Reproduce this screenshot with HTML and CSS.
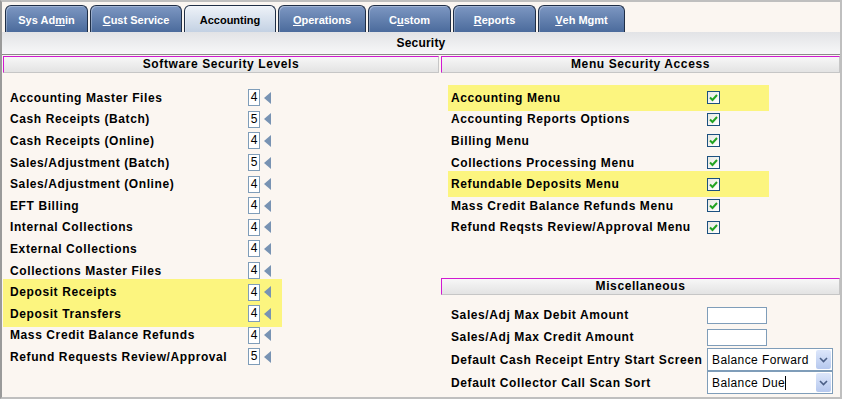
FILE: index.html
```html
<!DOCTYPE html>
<html lang="en">
<head>
    <meta charset="UTF-8">
    <title>Security</title>
    <link rel="stylesheet" href="styles.css">
</head>
<body>
    <div class="frame">
        <!-- top tabs -->
        <div class="tabs">
            <a class="tab">Sys Ad<u>m</u>in</a>
            <a class="tab"><u>C</u>ust Service</a>
            <a class="tab active">Accounting</a>
            <a class="tab"><u>O</u>perations</a>
            <a class="tab">C<u>u</u>stom</a>
            <a class="tab"><u>R</u>eports</a>
            <a class="tab"><u>V</u>eh Mgmt</a>
        </div>

        <div class="titlebar">Security</div>

        <div class="panels">
            <div class="panel left">
                <div class="panel-head">Software Security Levels</div>
                <ul class="levels">
                    <li class="row"><span class="label">Accounting Master Files</span><span class="lvl">4</span><span class="arrow"></span></li>
                    <li class="row"><span class="label">Cash Receipts (Batch)</span><span class="lvl">5</span><span class="arrow"></span></li>
                    <li class="row"><span class="label">Cash Receipts (Online)</span><span class="lvl">4</span><span class="arrow"></span></li>
                    <li class="row"><span class="label">Sales/Adjustment (Batch)</span><span class="lvl">5</span><span class="arrow"></span></li>
                    <li class="row"><span class="label">Sales/Adjustment (Online)</span><span class="lvl">4</span><span class="arrow"></span></li>
                    <li class="row"><span class="label">EFT Billing</span><span class="lvl">4</span><span class="arrow"></span></li>
                    <li class="row"><span class="label">Internal Collections</span><span class="lvl">4</span><span class="arrow"></span></li>
                    <li class="row"><span class="label">External Collections</span><span class="lvl">4</span><span class="arrow"></span></li>
                    <li class="row"><span class="label">Collections Master Files</span><span class="lvl">4</span><span class="arrow"></span></li>
                    <li class="row hl"><span class="label">Deposit Receipts</span><span class="lvl">4</span><span class="arrow"></span></li>
                    <li class="row hl"><span class="label">Deposit Transfers</span><span class="lvl">4</span><span class="arrow"></span></li>
                    <li class="row"><span class="label">Mass Credit Balance Refunds</span><span class="lvl">4</span><span class="arrow"></span></li>
                    <li class="row"><span class="label">Refund Requests Review/Approval</span><span class="lvl">5</span><span class="arrow"></span></li>
                </ul>
            </div>

            <div class="panel right">
                <div class="panel-head">Menu Security Access</div>
                <ul class="menus">
                    <li class="mrow hl"><span class="label">Accounting Menu</span><span class="check"><svg width="11" height="11" viewBox="0 0 11 11"><path d="M2 5.5 L4.5 8 L9 3" fill="none" stroke="#22a322" stroke-width="2"/></svg></span></li>
                    <li class="mrow"><span class="label">Accounting Reports Options</span><span class="check"><svg width="11" height="11" viewBox="0 0 11 11"><path d="M2 5.5 L4.5 8 L9 3" fill="none" stroke="#22a322" stroke-width="2"/></svg></span></li>
                    <li class="mrow"><span class="label">Billing Menu</span><span class="check"><svg width="11" height="11" viewBox="0 0 11 11"><path d="M2 5.5 L4.5 8 L9 3" fill="none" stroke="#22a322" stroke-width="2"/></svg></span></li>
                    <li class="mrow"><span class="label">Collections Processing Menu</span><span class="check"><svg width="11" height="11" viewBox="0 0 11 11"><path d="M2 5.5 L4.5 8 L9 3" fill="none" stroke="#22a322" stroke-width="2"/></svg></span></li>
                    <li class="mrow hl"><span class="label">Refundable Deposits Menu</span><span class="check"><svg width="11" height="11" viewBox="0 0 11 11"><path d="M2 5.5 L4.5 8 L9 3" fill="none" stroke="#22a322" stroke-width="2"/></svg></span></li>
                    <li class="mrow"><span class="label">Mass Credit Balance Refunds Menu</span><span class="check"><svg width="11" height="11" viewBox="0 0 11 11"><path d="M2 5.5 L4.5 8 L9 3" fill="none" stroke="#22a322" stroke-width="2"/></svg></span></li>
                    <li class="mrow"><span class="label">Refund Reqsts Review/Approval Menu</span><span class="check"><svg width="11" height="11" viewBox="0 0 11 11"><path d="M2 5.5 L4.5 8 L9 3" fill="none" stroke="#22a322" stroke-width="2"/></svg></span></li>
                </ul>

                <div class="panel-head misc-head">Miscellaneous</div>
                <div class="misc">
                    <div class="misc-row small"><span class="label">Sales/Adj Max Debit Amount</span><span class="field"></span></div>
                    <div class="misc-row small"><span class="label">Sales/Adj Max Credit Amount</span><span class="field"></span></div>
                    <div class="misc-row"><span class="label">Default Cash Receipt Entry Start Screen</span>
                        <span class="select">Balance Forward<span class="btn"><svg width="9" height="6" viewBox="0 0 9 6"><path d="M1 1 L4.5 4.5 L8 1" fill="none" stroke="#4b5f86" stroke-width="1.6"/></svg></span></span>
                    </div>
                    <div class="misc-row"><span class="label">Default Collector Call Scan Sort</span>
                        <span class="select">Balance Due<span class="caret"></span><span class="btn"><svg width="9" height="6" viewBox="0 0 9 6"><path d="M1 1 L4.5 4.5 L8 1" fill="none" stroke="#4b5f86" stroke-width="1.6"/></svg></span></span>
                    </div>
                </div>
            </div>
        </div>
    </div>
</body>
</html>
```

FILE: styles.css
```css
/* security settings screen */
body {
    margin: 0;
    font-family: "Liberation Sans", Arial, sans-serif;
    color: #000;
}

.frame {
    width: 842px;
    height: 399px;
    box-sizing: border-box;
    border: 2px solid #bfbfbf;
    border-left-color: #9a9a9a;
    background: #fbf6f1;
    overflow: hidden;
}

/* tabs */
.tabs {
    display: flex;
    gap: 2px;
    height: 27px;
    padding: 3px 0 0 3px;
}

.tab {
    display: flex;
    align-items: center;
    justify-content: center;
    box-sizing: border-box;
    height: 27px;
    border: 1px solid #1f2e46;
    border-bottom: 0;
    border-radius: 6px 6px 0 0;
    background: linear-gradient(#7d97c2, #4b6b9c);
    box-shadow: inset 1px 1px 0 rgba(255, 255, 255, 0.3);
    color: #fff;
    font-size: 11px;
    font-weight: bold;
    padding-top: 1px;
}

.tab:nth-child(1) { width: 83px; }
.tab:nth-child(2) { width: 92px; }
.tab:nth-child(3) { width: 92px; }
.tab:nth-child(4) { width: 88px; }
.tab:nth-child(5) { width: 83px; }
.tab:nth-child(6) { width: 83px; }
.tab:nth-child(7) { width: 87px; }

.tab.active {
    background: linear-gradient(#eef2f8, #c3d1e3);
    color: #000;
}

.titlebar {
    height: 22px;
    line-height: 22px;
    border-bottom: 1px solid #8a8a8a;
    background: linear-gradient(#e2e3e6, #f7f7f8);
    text-align: center;
    font-size: 12px;
    font-weight: bold;
    letter-spacing: 0.2px;
}

/* panels */
.panels {
    display: flex;
    gap: 2px;
    margin-top: 1px;
    padding-left: 1px;
}

.panel.left {
    width: 436px;
}

.panel.right {
    flex: 1;
}

.panel-head {
    height: 15px;
    line-height: 15px;
    border: 1px solid #c6c6c6;
    border-top-color: #d11ad1;
    border-left-color: #d11ad1;
    background: linear-gradient(#f7f7f7, #e3e3e3);
    text-align: center;
    font-size: 12px;
    font-weight: bold;
    letter-spacing: 0.6px;
}

.label {
    font-size: 12px;
    font-weight: bold;
    letter-spacing: 0.6px;
    white-space: nowrap;
}

ul {
    list-style: none;
    margin: 0;
    padding: 14px 0 0;
}

.row,
.mrow {
    display: flex;
    align-items: center;
    box-sizing: border-box;
    height: 21.6px;
}

.hl {
    background: #fcf57f;
    box-shadow: 0 -2px 0 #fcf57f, 0 2px 0 #fcf57f;
}

/* levels */
.row {
    width: 279px;
    padding-left: 7px;
}

.row .label {
    width: 238px;
}

.lvl {
    width: 12px;
    height: 17px;
    box-sizing: border-box;
    border: 1px solid #7f9db9;
    background: #fff;
    font-size: 12px;
    line-height: 15px;
    text-align: center;
}

.arrow {
    width: 0;
    height: 0;
    margin-left: 4px;
    border-style: solid;
    border-width: 6px 7px 6px 0;
    border-color: transparent #7893b3 transparent transparent;
}

/* menu access */
.mrow {
    width: 321px;
    margin-left: 7px;
    padding-left: 3px;
}

.mrow .label {
    width: 256px;
}

.check {
    display: flex;
    align-items: center;
    justify-content: center;
    width: 13px;
    height: 13px;
    box-sizing: border-box;
    border: 1px solid #1c5180;
    background: linear-gradient(135deg, #e8e8e2, #fff);
}

/* miscellaneous */
.misc-head {
    margin-top: 40px;
}

.misc {
    padding: 9px 0 0 10px;
}

.misc-row {
    display: flex;
    align-items: center;
    height: 23px;
}

.misc-row.small {
    height: 22px;
}

.misc-row .label {
    width: 256px;
}

.field {
    width: 60px;
    height: 17px;
    box-sizing: border-box;
    border: 1px solid #7f9db9;
    background: #fff;
}

.select {
    display: flex;
    align-items: center;
    width: 126px;
    height: 23px;
    box-sizing: border-box;
    border: 1px solid #7f9db9;
    background: #fff;
    padding-left: 4px;
    font-size: 12px;
    letter-spacing: 0.4px;
}

.caret {
    width: 1px;
    height: 14px;
    background: #000;
}

.select .btn {
    display: flex;
    align-items: center;
    justify-content: center;
    width: 15px;
    height: 19px;
    margin-left: auto;
    margin-right: 1px;
    border-radius: 2px;
    background: linear-gradient(#dde7fb, #b6c8ee);
}
```
